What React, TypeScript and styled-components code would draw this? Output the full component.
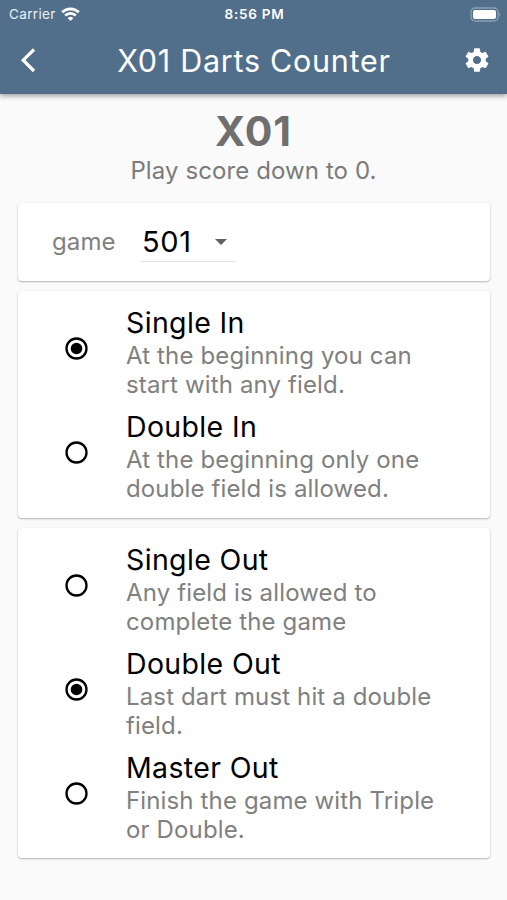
import React, { useState } from "react";
import styled, { createGlobalStyle } from "styled-components";

const GlobalStyle = createGlobalStyle`
  * { box-sizing: border-box; }
  body {
    margin: 0;
    background: #fafafa;
    font-family: Inter, "Liberation Sans", sans-serif;
  }
`;

const Screen = styled.div`
  width: 507px;
  height: 900px;
  overflow: hidden;
  background: #fafafa;
`;

const AppBar = styled.header`
  height: 94px;
  background: #516f8b;
  color: #fff;
  box-shadow: 0 2px 5px rgba(0, 0, 0, 0.36);
`;

const StatusBar = styled.div`
  display: grid;
  grid-template-columns: 1fr auto 1fr;
  align-items: center;
  height: 27px;
  padding: 0 6px 0 9px;
  font-size: 13px;
  line-height: 27px;
`;

const Carrier = styled.div`
  display: flex;
  align-items: center;
  gap: 5px;
  color: #e9eff5;
  font-size: 13.5px;
  letter-spacing: 0.35px;
`;

const Clock = styled.div`
  padding-top: 1px;
  font-size: 13.5px;
  font-weight: 600;
  letter-spacing: 0.75px;
  margin-right: 1px;
`;

const Battery = styled.div`
  display: flex;
  justify-content: flex-end;
`;

const TitleBar = styled.div`
  display: grid;
  grid-template-columns: 56px 1fr 60px;
  align-items: center;
  height: 65px;
`;

const Title = styled.h1`
  margin: 2px 0 0 5px;
  text-align: center;
  font-size: 30.5px;
  font-weight: 400;
  line-height: 36px;
  letter-spacing: 0.73px;
  white-space: nowrap;
`;

const IconButton = styled.button`
  display: flex;
  align-items: center;
  justify-content: center;
  height: 56px;
  padding: 0;
  border: 0;
  background: none;
  color: inherit;
`;

const Intro = styled.section`
  height: 109px;
  padding-top: 13px;
  text-align: center;
`;

const Heading = styled.h2`
  margin: 0;
  color: #6f6f6f;
  font-size: 41px;
  font-weight: 700;
  line-height: 48px;
  letter-spacing: 0.9px;
`;

const Subtitle = styled.p`
  margin: 1px 0 0;
  color: #7a7a7a;
  font-size: 24px;
  line-height: 30px;
  letter-spacing: 0.1px;
`;

const Cards = styled.main`
  display: flex;
  flex-direction: column;
  gap: 10px;
  padding: 0 17px 0 18px;
`;

const Card = styled.section<{ $height: number }>`
  height: ${(p) => p.$height}px;
  border-radius: 4px;
  background: #fff;
  box-shadow: 0 1px 2px rgba(0, 0, 0, 0.28), 0 0 1px rgba(0, 0, 0, 0.08);
`;

const GameRow = styled.div`
  display: flex;
  align-items: center;
  height: 78px;
  padding-left: 34px;
  gap: 26px;
`;

const GameLabel = styled.span`
  width: 63px;
  color: #808080;
  font-size: 24px;
  line-height: 30px;
  letter-spacing: 0.1px;
`;

const Select = styled.button`
  display: flex;
  align-items: center;
  justify-content: space-between;
  width: 95px;
  height: 39px;
  padding: 0 9px 0 1px;
  border: 0;
  border-bottom: 1px solid #e4e4e4;
  background: none;
  color: #000;
  font: inherit;
  font-size: 29px;
  letter-spacing: 0.7px;
`;

const Options = styled.div`
  display: flex;
  flex-direction: column;
  gap: 13px;
  padding-top: 16px;
`;

const Option = styled.div`
  display: grid;
  grid-template-columns: 108px 1fr;
  height: 91px;
`;

const RadioCell = styled.div`
  padding: 30px 0 0 47px;
`;

const Radio = styled.button<{ $checked: boolean }>`
  display: block;
  padding: 0;
  border: 0;
  background: none;

  svg {
    display: block;
  }

  circle:last-child {
    fill: ${(p) => (p.$checked ? "#000" : "none")};
  }
`;

const OptionTitle = styled.div`
  padding-bottom: 2px;
  color: #000;
  font-size: 28.5px;
  line-height: 32px;
  letter-spacing: 0.35px;
`;

const OptionText = styled.div`
  color: #808080;
  font-size: 24px;
  line-height: 29px;
  letter-spacing: 0.14px;
  white-space: pre;
`;

type Item = { title: string; text: string };

const inItems: Item[] = [
  { title: "Single In", text: "At the beginning you can\nstart with any field." },
  { title: "Double In", text: "At the beginning only one\ndouble field is allowed." },
];

const outItems: Item[] = [
  { title: "Single Out", text: "Any field is allowed to\ncomplete the game" },
  { title: "Double Out", text: "Last dart must hit a double\nfield." },
  { title: "Master Out", text: "Finish the game with Triple\nor Double." },
];

function WifiIcon() {
  return (
    <svg width="19" height="15" viewBox="0 0 19 15" fill="none" stroke="#fff" strokeWidth="2.7">
      <path d="M1.2 5.2a11.8 11.8 0 0 1 16.6 0" />
      <path d="M4.2 8.5a7.5 7.5 0 0 1 10.6 0" />
      <path d="M9.5 14 6.7 11.2a4 4 0 0 1 5.6 0Z" fill="#fff" stroke="none" />
    </svg>
  );
}

function BatteryIcon() {
  return (
    <svg width="31" height="15" viewBox="0 0 31 15">
      <rect x="1" y="1" width="27" height="13" rx="4" fill="none" stroke="#8ba0b3" strokeWidth="1.3" />
      <rect x="3" y="3" width="23" height="9" rx="2" fill="#fff" />
      <path d="M29.2 5.5c1.6.7 1.6 3.3 0 4Z" fill="#8ba0b3" />
    </svg>
  );
}

function BackIcon() {
  return (
    <svg width="28" height="28" viewBox="0 0 28 28" fill="none" stroke="#fff" strokeWidth="3.2">
      <path d="M20 3.5 9.2 14.2 20 25" />
    </svg>
  );
}

function GearIcon() {
  return (
    <svg width="28" height="28" viewBox="0 0 24 24" fill="#fff">
      <path d="M19.43 12.98c.04-.32.07-.64.07-.98s-.03-.66-.07-.98l2.11-1.65c.19-.15.24-.42.12-.64l-2-3.46c-.12-.22-.39-.3-.61-.22l-2.49 1c-.52-.4-1.08-.73-1.69-.98l-.38-2.65C14.46 2.18 14.25 2 14 2h-4c-.25 0-.46.18-.49.42l-.38 2.65c-.61.25-1.17.59-1.69.98l-2.49-1c-.23-.09-.49 0-.61.22l-2 3.46c-.13.22-.07.49.12.64l2.11 1.65c-.04.32-.07.65-.07.98s.03.66.07.98l-2.11 1.65c-.19.15-.24.42-.12.64l2 3.46c.12.22.39.3.61.22l2.49-1c.52.4 1.08.73 1.69.98l.38 2.65c.03.24.24.42.49.42h4c.25 0 .46-.18.49-.42l.38-2.65c.61-.25 1.17-.59 1.69-.98l2.49 1c.23.09.49 0 .61-.22l2-3.46c.12-.22.07-.49-.12-.64l-2.11-1.65zM12 15.5c-1.93 0-3.5-1.57-3.5-3.5s1.57-3.5 3.5-3.5 3.5 1.57 3.5 3.5-1.57 3.5-3.5 3.5z" />
    </svg>
  );
}

function CaretIcon() {
  return (
    <svg width="12" height="6" viewBox="0 0 12 6">
      <path d="M0 0h12L6 6Z" fill="#616161" />
    </svg>
  );
}

function RadioIcon() {
  return (
    <svg width="23" height="23" viewBox="0 0 23 23">
      <circle cx="11.5" cy="11.5" r="10" fill="none" stroke="#000" strokeWidth="2.3" />
      <circle cx="11.5" cy="11.5" r="5.8" />
    </svg>
  );
}

function OptionList({ items, initial }: { items: Item[]; initial: number }) {
  const [selected, setSelected] = useState(initial);
  return (
    <Options>
      {items.map((item, i) => (
        <Option key={item.title}>
          <RadioCell>
            <Radio $checked={i === selected} onClick={() => setSelected(i)} aria-label={item.title}>
              <RadioIcon />
            </Radio>
          </RadioCell>
          <div>
            <OptionTitle>{item.title}</OptionTitle>
            <OptionText>{item.text}</OptionText>
          </div>
        </Option>
      ))}
    </Options>
  );
}

export default function App() {
  return (
    <Screen>
      <GlobalStyle />
      <AppBar>
        <StatusBar>
          <Carrier>
            Carrier
            <WifiIcon />
          </Carrier>
          <Clock>8:56 PM</Clock>
          <Battery>
            <BatteryIcon />
          </Battery>
        </StatusBar>
        <TitleBar>
          <IconButton aria-label="Back">
            <BackIcon />
          </IconButton>
          <Title>X01 Darts Counter</Title>
          <IconButton aria-label="Settings">
            <GearIcon />
          </IconButton>
        </TitleBar>
      </AppBar>
      <Intro>
        <Heading>X01</Heading>
        <Subtitle>Play score down to 0.</Subtitle>
      </Intro>
      <Cards>
        <Card $height={78}>
          <GameRow>
            <GameLabel>game</GameLabel>
            <Select>
              501
              <CaretIcon />
            </Select>
          </GameRow>
        </Card>
        <Card $height={227}>
          <OptionList items={inItems} initial={0} />
        </Card>
        <Card $height={330}>
          <OptionList items={outItems} initial={1} />
        </Card>
      </Cards>
    </Screen>
  );
}
